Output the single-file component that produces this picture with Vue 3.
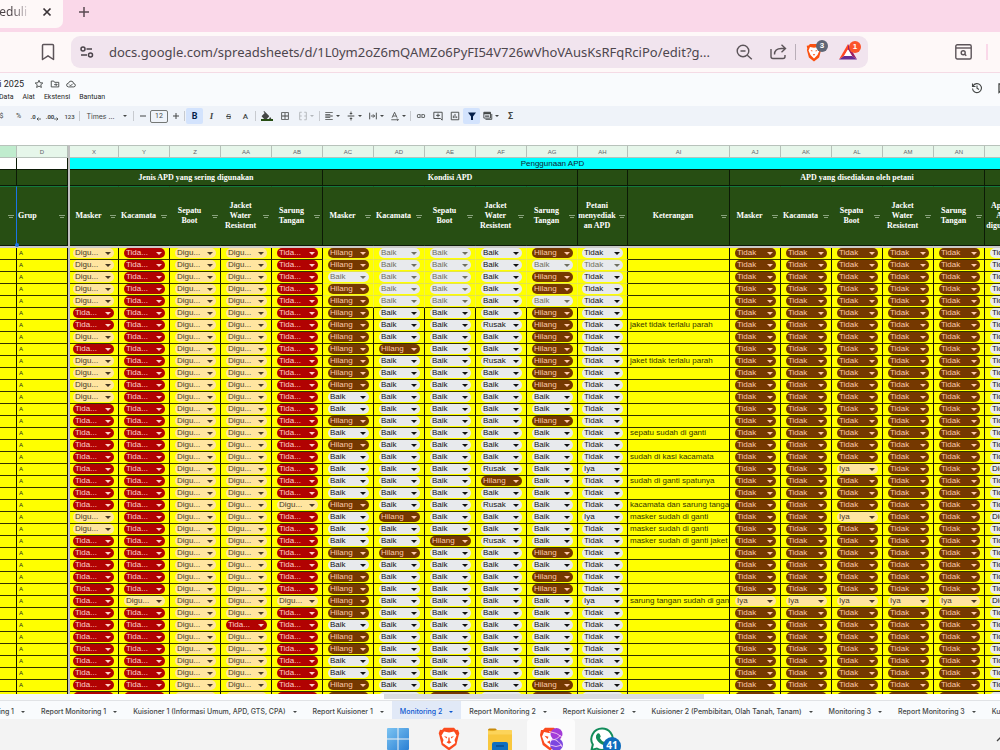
<script setup>
import { ref } from 'vue'

const url = ref('docs.google.com/spreadsheets/d/1L0ym2oZ6mQAMZo6PyFI54V726wVhoVAusKsRFqRciPo/edit?g...')
const fontSize = ref('12')

const menus = ['Data', 'Alat', 'Ekstensi', 'Bantuan']

const sheets = [
  'Monitoring 1',
  'Report Monitoring 1',
  'Kuisioner 1 (Informasi Umum, APD, GTS, CPA)',
  'Report Kuisioner 1',
  'Monitoring 2',
  'Report Monitoring 2',
  'Report Kuisioner 2',
  'Kuisioner 2 (Pembibitan, Olah Tanah, Tanam)',
  'Monitoring 3',
  'Report Monitoring 3',
  'Kuisioner 3',
]
const activeSheet = ref('Monitoring 2')

const letters = ['X', 'Y', 'Z', 'AA', 'AB', 'AC', 'AD', 'AE', 'AF', 'AG', 'AH', 'AI', 'AJ', 'AK', 'AL', 'AM', 'AN', 'AO']

const kit = ['Masker', 'Kacamata', 'Sepatu\nBoot', 'Jacket\nWater\nResistent', 'Sarung\nTangan']
const heads = [...kit, ...kit, 'Petani\nmenyediak\nan APD', 'Keterangan', ...kit, 'Apakah\nAPD\ndigunakan']
const groupEnds = [4, 9, 10, 11, 16]

const kinds = {
  D: { text: 'Digu...', cls: 'cream' },
  T: { text: 'Tida...', cls: 'red' },
  H: { text: 'Hilang', cls: 'brown' },
  B: { text: 'Baik', cls: 'gray' },
  b: { text: 'Baik', cls: 'gray faded' },
  R: { text: 'Rusak', cls: 'gray' },
  N: { text: 'Tidak', cls: 'gray' },
  n: { text: 'Tidak', cls: 'gray faded' },
  I: { text: 'Iya', cls: 'gray' },
  K: { text: 'Tidak', cls: 'brown' },
  Y: { text: 'Iya', cls: 'cream' },
  G: { text: 'Digu...', cls: 'gray' },
}

const source = [
  ['DTDDT HbbBH N'],
  ['DTDDT HbbBb n'],
  ['DTDDT bbbBH N'],
  ['DTDDT HbbBH N'],
  ['DTDDT HbbBb N'],
  ['TTDDT HBBBH N'],
  ['TTDDT HBBRH N', 'jaket tidak terlalu parah'],
  ['DTDDT HBBBH N'],
  ['TTDDT HHBBH N'],
  ['DTDDT HBBRH N', 'jaket tidak terlalu parah'],
  ['DTDDT HBBBH N'],
  ['DTDDT HBBBH N'],
  ['DTDDT BBBBB N'],
  ['TTDDT BBBBB N'],
  ['TTDDT HBBBH N'],
  ['TTDDT BBBBB N', 'sepatu sudah di ganti'],
  ['TTDDT HBBBB N'],
  ['TTDDT BBBBB N', 'sudah di kasi kacamata'],
  ['TTDDT BBBRB I', '', 'KKYKKG'],
  ['TTDDT BBBHB N', 'sudah di ganti spatunya'],
  ['TTDDT BBBBB N'],
  ['TTDDD HBBRB N', 'kacamata dan sarung tangan'],
  ['DTDDT BHBBB I', 'masker sudah di ganti', 'KKYKKG'],
  ['DTDDT BBBBB N', 'masker sudah di ganti'],
  ['TTDDT BBHRB N', 'masker sudah di ganti jaket'],
  ['TTDDT HHBBH N'],
  ['TTDDT BBBBB N'],
  ['TTDDT HBBBH N'],
  ['TTDDT HBBBH N'],
  ['TDDDD HBBBB I', 'sarung tangan sudah di ganti', 'YYYYYG'],
  ['TTDDT HBBBB N'],
  ['TTDTT BBBBB N'],
  ['TTDDT HBBBB N'],
  ['TTDDT HBBBB N'],
  ['TTDDT BBBBB N'],
  ['TTDDT BBBBB N'],
  ['TTDDT HBBBH N'],
  ['TTDDT HBHBH N'],
]

const rows = source.map(([codes, note = '', supplied = 'KKKKKN'], r) => {
  const used = [...codes.replace(/ /g, '')].map((c, i) => ({
    ...kinds[c],
    softX: r < 5 && i > 4 && i < 10,
    softY: r < 4 && i > 4,
  }))
  return { used, note, supplied: [...supplied].map((c) => kinds[c]) }
})
</script>

<template>
  <div class="screen">
    <header class="tabstrip">
      <div class="browser-tab">
        <span class="tab-title">Peduli</span>
        <button class="plain" aria-label="Tutup tab">
          <svg width="10" height="10" viewBox="0 0 10 10"><path d="M1.500 1.500l7 7M8.500 1.500l-7 7" stroke="#3b3438" stroke-width="1.700" /></svg>
        </button>
      </div>
      <button class="plain new-tab" aria-label="Tab baru">
        <svg width="12" height="12" viewBox="0 0 12 12"><path d="M6 1v10M1 6h10" stroke="#5a4a52" stroke-width="1.500" /></svg>
      </button>
    </header>

    <div class="navbar">
      <button class="plain bookmark" aria-label="Bookmark">
        <svg width="14" height="18" viewBox="0 0 14 18"><path d="M1.500 2.500q0-1 1-1h9q1 0 1 1v14L7 12.800 1.500 16.500z" fill="none" stroke="#5c5459" stroke-width="1.500" stroke-linejoin="round" /></svg>
      </button>
      <div class="address">
        <button class="plain tune" aria-label="Info situs">
          <svg width="14" height="12" viewBox="0 0 14 12" fill="none" stroke="#4a434a" stroke-width="1.500"><circle cx="3" cy="3" r="2" /><path d="M6.500 3H12M1 9h6" /><circle cx="10.500" cy="9" r="2" /></svg>
        </button>
        <input v-model="url" class="url" aria-label="Alamat" spellcheck="false" />
        <button class="plain icon-a" aria-label="Perkecil">
          <svg width="17" height="17" viewBox="0 0 17 17" fill="none" stroke="#5c5459" stroke-width="1.400"><circle cx="7" cy="7" r="5.800" /><path d="M4.500 7h5M11.300 11.300l4.500 4" /></svg>
        </button>
        <button class="plain icon-b" aria-label="Bagikan">
          <svg width="17" height="16" viewBox="0 0 17 16" fill="none" stroke="#5c5459" stroke-width="1.400"><path d="M1 5v7.500q0 2 2 2h10q2 0 2-2V11M4.500 10.500q0-6 7-6h4M11.500.800l4 3.700-4 3.700" /></svg>
        </button>
        <span class="divider"></span>
        <button class="plain shield" aria-label="Brave Shields">
          <svg width="16" height="19" viewBox="0 0 16 19"><path d="M4 1h8l1.500 1.500 1.800.3-.6 2.700.4 1.500-2 7.500L8 18.500 2.900 14.500.9 7l.4-1.500L.7 2.800l1.800-.3z" fill="#fb5110" /><path d="M4 4l4 .8L12 4l1.500 3.500-2 4.500L8 15.500 4.500 12l-2-4.500z" fill="#fff" /><path d="M4.500 6.900l2 .6-.4 1.300zM11.500 6.900l-2 .6.4 1.300zM6.800 11.500l1.200-.6 1.200.6L8 12.700z" fill="#fb5110" /></svg>
          <span class="badge slate">3</span>
        </button>
        <button class="plain triangle" aria-label="Brave Rewards">
          <svg width="18" height="16" viewBox="0 0 18 16"><path d="M9 0L0 15.500 5 12 9 5.500z" fill="#ff4724" /><path d="M9 0l9 15.500L13 12 9 5.500z" fill="#9e1f63" /><path d="M0 15.500h18L13 12H5z" fill="#662d91" /><path d="M9 5.500L5 12h8z" fill="#fff" /></svg>
          <span class="badge orange">1</span>
        </button>
      </div>
      <button class="plain find" aria-label="Cari tab">
        <svg width="17" height="16" viewBox="0 0 17 16" fill="none" stroke="#5c5459" stroke-width="1.400"><rect x=".8" y=".8" width="15.400" height="14.200" rx="1.500" /><path d="M1 4h15" /><circle cx="8.200" cy="8.800" r="2" /><path d="M9.700 10.300l1.600 1.500" /></svg>
      </button>
      <span class="edge"></span>
    </div>

    <div class="doc-head">
      <div class="doc-left">
        <div class="title-row">
          <span class="doc-title">i 2025</span>
          <button class="plain" aria-label="Bintang"><svg width="10" height="10" viewBox="0 0 24 24" fill="none" stroke="#444746" stroke-width="2.200"><path d="M12 3l2.700 6 6.500.6-5 4.300 1.500 6.400L12 17l-5.700 3.300 1.500-6.400-5-4.300 6.500-.6z" /></svg></button>
          <button class="plain" aria-label="Pindahkan"><svg width="10" height="10" viewBox="0 0 24 24" fill="none" stroke="#444746" stroke-width="2.200"><path d="M3 19V5h6l2 3h10v11zM10 13.500h7M14 10.500l3 3-3 3" /></svg></button>
          <button class="plain" aria-label="Tersimpan"><svg width="10" height="10" viewBox="0 0 24 24" fill="none" stroke="#444746" stroke-width="2.200"><path d="M6 19q-4.500-.5-4.500-4.500T6 10q1.500-5 6-5 5.500 0 6.500 6 4 .5 4 4t-4 4zM8 13.500l3 3 5-5" /></svg></button>
        </div>
        <nav class="menus">
          <button v-for="m in menus" :key="m" class="plain">{{ m }}</button>
        </nav>
      </div>
      <div class="doc-right">
        <button class="plain" aria-label="Histori"><svg width="12" height="12" viewBox="0 0 24 24" fill="none" stroke="#444746" stroke-width="2.200"><path d="M4 8a9 9 0 1 1-1 5M3 3v6h6M12 7v5.500l4 2.500" /></svg></button>
        <button class="plain" aria-label="Komentar"><svg width="10" height="12" viewBox="0 0 10 12" fill="none" stroke="#444746" stroke-width="1.300"><path d="M1 10.500V2h8v7H3z" /></svg></button>
      </div>
    </div>

    <div class="toolbar">
      <button class="plain w17">$</button>
      <button class="plain w17">%</button>
      <button class="plain w17 dec" aria-label="Kurangi desimal">.0<svg width="5" height="4" viewBox="0 0 5 4"><path d="M5 2H1M2.500.500L1 2l1.500 1.500" stroke="#444746" fill="none" stroke-width=".8" /></svg></button>
      <button class="plain w17 dec" aria-label="Tambah desimal">.00<svg width="5" height="4" viewBox="0 0 5 4"><path d="M0 2h4M2.500.500L4 2 2.500 3.500" stroke="#444746" fill="none" stroke-width=".8" /></svg></button>
      <button class="plain w17 num">123</button>
      <span class="sep"></span>
      <button class="plain font-pick"><span>Times ...</span><i class="caret"></i></button>
      <span class="sep"></span>
      <button class="plain w14" aria-label="Kurangi"><svg width="8" height="8" viewBox="0 0 8 8"><path d="M1 4h6" stroke="#444746" /></svg></button>
      <input v-model="fontSize" class="size" aria-label="Ukuran font" />
      <button class="plain w14" aria-label="Tambah"><svg width="8" height="8" viewBox="0 0 8 8"><path d="M1 4h6M4 1v6" stroke="#444746" /></svg></button>
      <span class="sep"></span>
      <button class="plain w17 on"><b>B</b></button>
      <button class="plain w17 ital"><em>I</em></button>
      <button class="plain w17"><s>S</s></button>
      <button class="plain w17 tcolor">A</button>
      <span class="sep"></span>
      <button class="plain w19 fill" aria-label="Warna isi"><svg width="11" height="9" viewBox="2 0 20 17"><path d="M16.560 8.940L7.620 0 6.210 1.410l2.380 2.380-5.150 5.150c-.59.59-.59 1.540 0 2.120l5.500 5.500c.6.590 1.500.590 2.120 0l5.500-5.500c.59-.58.59-1.530 0-2.120zM19 11.500s-2 2.170-2 3.500a2 2 0 0 0 4 0c0-1.330-2-3.500-2-3.500z" fill="#444746" /></svg></button>
      <button class="plain w17" aria-label="Batas"><svg width="10" height="10" viewBox="0 0 24 24"><path d="M3 3v18h18V3H3zm8 16H5v-6h6v6zm0-8H5V5h6v6zm8 8h-6v-6h6v6zm0-8h-6V5h6v6z" fill="#444746" /></svg></button>
      <button class="plain split dim" aria-label="Gabungkan"><svg width="10" height="10" viewBox="0 0 24 24"><path d="M9 3H4v18h5M15 3h5v18h-5M4 12h5M20 12h-5" fill="none" stroke="#444746" stroke-width="2.200" /></svg><i class="caret"></i></button>
      <span class="sep"></span>
      <button class="plain split" aria-label="Rata"><svg width="10" height="10" viewBox="0 0 24 24"><path d="M15 15H3v2h12v-2zm0-8H3v2h12V7zM3 13h18v-2H3v2zm0 8h18v-2H3v2zM3 3v2h18V3H3z" fill="#444746" /></svg><i class="caret"></i></button>
      <button class="plain split" aria-label="Rata vertikal"><svg width="10" height="10" viewBox="0 0 24 24"><path d="M8 19h3v4h2v-4h3l-4-4-4 4zm8-14h-3V1h-2v4H8l4 4 4-4zM4 11v2h16v-2H4z" fill="#444746" /></svg><i class="caret"></i></button>
      <button class="plain split" aria-label="Pembungkusan"><svg width="10" height="10" viewBox="0 0 24 24"><path d="M4 4v16M20 4v16M7 12h9M12 8l4 4-4 4" fill="none" stroke="#444746" stroke-width="2.200" /></svg><i class="caret"></i></button>
      <button class="plain split" aria-label="Rotasi"><svg width="10" height="10" viewBox="0 0 24 24"><path d="M5 16L11 3l6 13M7 12h8M3 21h17M17 18l3 3-3 2" fill="none" stroke="#444746" stroke-width="2" /></svg><i class="caret"></i></button>
      <span class="sep"></span>
      <button class="plain w17" aria-label="Link"><svg width="10" height="10" viewBox="0 0 24 24"><path d="M3.900 12c0-1.710 1.390-3.100 3.100-3.100h4V7H7c-2.760 0-5 2.240-5 5s2.240 5 5 5h4v-1.900H7c-1.710 0-3.100-1.390-3.100-3.100zM8 13h8v-2H8v2zm9-6h-4v1.900h4c1.710 0 3.100 1.390 3.100 3.100s-1.390 3.100-3.100 3.100h-4V17h4c2.760 0 5-2.240 5-5s-2.240-5-5-5z" fill="#444746" /></svg></button>
      <button class="plain w17" aria-label="Komentar"><svg width="10" height="10" viewBox="0 0 24 24"><path d="M2 3h20v19l-4-4H2zM12 6v9M7.500 10.500h9" fill="none" stroke="#444746" stroke-width="2.200" /></svg></button>
      <button class="plain w17" aria-label="Diagram"><svg width="10" height="10" viewBox="0 0 24 24"><path d="M3 3h18v18H3zM8 17v-6M12 17V7M16 17v-4" fill="none" stroke="#444746" stroke-width="2.200" /></svg></button>
      <button class="plain w17 on" aria-label="Filter"><svg width="8" height="8" viewBox="0 0 8 8"><path d="M0 .500h8L5 4.500V8H3V4.500z" fill="#041e49" /></svg></button>
      <button class="plain split" aria-label="Tampilan tabel"><svg width="10" height="10" viewBox="0 0 24 24"><path d="M2 3h16v14H2zM6 20h15V7" fill="none" stroke="#444746" stroke-width="2.200" /><path d="M2 3h16v5H2zM5 11h10v3H5z" fill="#444746" /></svg><i class="caret"></i></button>
      <button class="plain w17"><b>Σ</b></button>
    </div>

    <main class="grid">
      <table>
        <colgroup>
          <col class="c-c" /><col class="c-std" /><col class="c-bar" /><col class="c-x" />
          <col v-for="n in 9" :key="n" class="c-std" />
          <col class="c-ah" /><col class="c-ai" />
          <col v-for="n in 6" :key="'r' + n" class="c-std" />
        </colgroup>
        <thead>
          <tr class="letters">
            <th class="picked"></th>
            <th>D</th>
            <th class="bar"></th>
            <th v-for="l in letters" :key="l">{{ l }}</th>
          </tr>
          <tr class="banner">
            <th class="blank"></th>
            <th class="blank"></th>
            <th class="bar"></th>
            <th colspan="18" class="cyan">Penggunaan APD</th>
          </tr>
          <tr class="groups">
            <th></th>
            <th></th>
            <th class="bar"></th>
            <th colspan="5">Jenis APD yang sering digunakan</th>
            <th colspan="5">Kondisi APD</th>
            <th></th>
            <th></th>
            <th colspan="5">APD yang disediakan oleh petani</th>
            <th></th>
          </tr>
          <tr class="heads">
            <th class="selected"><i class="funnel"></i><i class="handle"></i></th>
            <th class="left">Grup<i class="funnel"></i></th>
            <th class="bar"></th>
            <th v-for="(h, i) in heads" :key="i" :class="{ end: groupEnds.includes(i) }">{{ h }}<i class="funnel"></i></th>
          </tr>
          <tr class="freeze"><td colspan="21"></td></tr>
        </thead>
        <tbody>
          <tr v-for="(row, r) in rows" :key="r">
            <td></td>
            <td class="grp">A</td>
            <td class="bar"></td>
            <td v-for="(c, i) in row.used" :key="'u' + i" :class="{ softx: c.softX, softy: c.softY }">
              <label class="chip" :class="c.cls"><select :aria-label="letters[i] + ' ' + (r + 1)"><option>{{ c.text }}</option></select></label>
            </td>
            <td class="note"><div>{{ row.note }}</div></td>
            <td v-for="(c, i) in row.supplied" :key="'s' + i">
              <label class="chip" :class="c.cls"><select :aria-label="letters[i + 12] + ' ' + (r + 1)"><option>{{ c.text }}</option></select></label>
            </td>
          </tr>
        </tbody>
      </table>
    </main>

    <div class="scroll"><span class="thumb"></span></div>

    <nav class="sheets">
      <button v-for="s in sheets" :key="s" class="plain sheet" :class="{ active: s === activeSheet }" @click="activeSheet = s">
        {{ s }}<i class="caret"></i>
      </button>
    </nav>

    <footer class="taskbar">
      <button class="plain app" aria-label="Start">
        <svg width="24" height="24" viewBox="0 0 24 24"><defs><linearGradient id="win" x1="0" y1="0" x2="1" y2="1"><stop offset="0" stop-color="#7cc4f2" /><stop offset="1" stop-color="#2a7fd4" /></linearGradient></defs><path d="M1 2q0-1 1-1h9.500v10.500H1zM12.500 1H22q1 0 1 1v9.500H12.500zM1 12.500h10.500V23H2q-1 0-1-1zM12.500 12.500H23V22q0 1-1 1h-9.500z" fill="url(#win)" /></svg>
      </button>
      <button class="plain app" aria-label="Brave">
        <svg width="22" height="24" viewBox="0 0 22 24"><path d="M6 .800h10L18 3l2-.2 1.300 3.500-.6 2L18.300 18 11 23.500 3.700 18 1.300 8.300l-.6-2L2 2.800 4 3z" fill="#fb4b1e" /><path d="M6 4.500l5 1 5-1 2.500 4-2 4.500.8 3L11 20.500 4.700 16l.8-3-2-4.500z" fill="#fff" /><path d="M6 9l3.200.9-.7 1.500zM16 9l-3.200.9.7 1.500zM10.400 10.500h1.200l.2 3.500 1.700 1.200-2.500 1.600-2.500-1.600 1.700-1.200z" fill="#fb4b1e" /></svg>
      </button>
      <button class="plain app" aria-label="File Explorer">
        <svg width="26" height="24" viewBox="0 0 26 24"><path d="M1 3q0-1.500 1.500-1.500h6L11 4h-10z" fill="#c88a0a" /><path d="M1 3.500h24q0 0 0 1V24H1z" fill="#f8c73d" /><path d="M1 3.500q6 1.500 9-.5h14q1 0 1 1.500v3H1z" fill="#fcd45a" /><path d="M5 24v-7q0-2 2-2h12q2 0 2 2v7z" fill="#0f6fc0" /><path d="M9 19h8" stroke="#0a4b8c" stroke-width="1.500" /></svg>
      </button>
      <button class="plain app current" aria-label="Brave Meet">
        <svg width="24" height="24" viewBox="0 0 24 24"><path d="M6 .800h9L17 3l2 0 1 3L18 18l-7 5.500L3.700 18 1 8l1-5 2 0z" fill="#fb4b1e" /><path d="M5 5l5 1 6-1v13l-5 2.500L5.500 16 3 9.500z" fill="#fff" /><path d="M5.500 8.800l4 1-1 2.200zM8 15l3-1.500V17z" fill="#fb4b1e" /><circle cx="17.500" cy="7" r="6" fill="#a23bd8" /><circle cx="17.500" cy="17.500" r="6.500" fill="#7b46e0" /><path d="M10 4.500q8 1 13 5.500M11.500 13q7 0 10-5M11 18q6 3 12 0M13 12q7 1 10 8" fill="none" stroke="#f4c7f2" stroke-width=".9" /></svg>
      </button>
      <button class="plain app" aria-label="WhatsApp">
        <svg width="26" height="24" viewBox="0 0 26 24"><path d="M13 1.500A10.700 10.700 0 0 0 3.800 17.600L2.500 23l5.400-1.500A10.700 10.700 0 1 0 13 1.500z" fill="#fff" stroke="#128c5a" stroke-width="2" /><path d="M8.500 6.500q1.500-1 2.300.8l.9 2q.2.700-.9 1.700 1.600 3 4.500 4 1-1.500 1.500-1.200l2.200 1.200q.8.500-.3 2-2 2.300-5.700.5-4.500-2.200-6-6.500Q6.400 8 8.500 6.500z" fill="#128c5a" /></svg>
        <span class="count">41</span>
      </button>
      <button class="plain tray" aria-label="Ikon tersembunyi">
        <svg width="12" height="8" viewBox="0 0 12 8"><path d="M1 7l5-5 5 5" fill="none" stroke="#444" stroke-width="1.300" /></svg>
      </button>
    </footer>
  </div>
</template>

<style>
body {
  margin: 0;
  overflow: hidden;
}
</style>

<style scoped>
.screen {
  display: flex;
  flex-direction: column;
  height: 100vh;
  overflow: hidden;
  background: #fff;
  font-family: Roboto, "Liberation Sans", sans-serif;
}
.plain {
  display: flex;
  align-items: center;
  justify-content: center;
  flex: none;
  margin: 0;
  padding: 0;
  border: 0;
  background: none;
  font: inherit;
  color: inherit;
  white-space: nowrap;
  position: relative;
}
svg {
  display: block;
  flex: none;
}

/* browser chrome */
.tabstrip {
  display: flex;
  flex: none;
  height: 32px;
  background: #fad8e9;
}
.browser-tab {
  display: flex;
  align-items: center;
  justify-content: flex-end;
  box-sizing: border-box;
  width: 63px;
  height: 28px;
  padding: 0 11px 4px 0;
  gap: 15px;
  background: #fef8f8;
  border-radius: 0 0 7px 0;
}
.tab-title {
  font: 12px/16px "Noto Sans", sans-serif;
  background: linear-gradient(90deg, #4b4347 60%, #d8d0d4);
  background-clip: text;
  color: transparent;
}
.new-tab {
  width: 42px;
  height: 24px;
}
.navbar {
  display: flex;
  align-items: center;
  flex: none;
  box-sizing: border-box;
  height: 41px;
  border-bottom: 1px solid #f5dbe5;
  background: #fef8f8;
}
.bookmark {
  margin-left: 41px;
}
.address {
  display: flex;
  align-items: center;
  flex: 1;
  height: 32px;
  margin-left: 16px;
  padding: 0 8px 0 9px;
  background: #f1e4ee;
  border-radius: 9px;
}
.url {
  flex: 1;
  min-width: 0;
  height: 24px;
  margin-left: 15px;
  padding: 0;
  border: 0;
  outline: 0;
  background: none;
  font: 13px/24px "Noto Sans", sans-serif;
  color: #4d464d;
}
.icon-a {
  margin-left: 12px;
}
.icon-b {
  margin-left: 17px;
}
.divider {
  width: 1px;
  height: 16px;
  margin-left: 8px;
  background: #b9aeb8;
}
.shield {
  margin-left: 10px;
}
.triangle {
  margin-left: 17px;
  margin-right: 3px;
}
.badge {
  position: absolute;
  left: 10px;
  top: -3px;
  width: 12px;
  height: 12px;
  border-radius: 6px;
  font: bold 8px/12px "Liberation Sans", sans-serif;
  color: #fff;
}
.slate {
  background: #5f6675;
}
.orange {
  background: #fb542b;
}
.find {
  margin-left: 87px;
}
.edge {
  width: 2px;
  height: 16px;
  margin: 0 12px 0 14px;
  background: #fad8e9;
}

/* document header */
.doc-head {
  display: flex;
  justify-content: space-between;
  flex: none;
  height: 33px;
  overflow: hidden;
  background: #f9fbfd;
  color: #1f1f1f;
}
.title-row {
  display: flex;
  align-items: center;
  gap: 6px;
  height: 14px;
  margin-top: 4px;
}
.doc-title {
  display: flex;
  justify-content: flex-end;
  width: 24px;
  margin-right: 4px;
  font: 9px/14px Roboto, sans-serif;
  white-space: nowrap;
}
.menus {
  display: flex;
  gap: 9px;
  height: 12px;
  margin-left: -1px;
  font-size: 7px;
  line-height: 12px;
}
.doc-right {
  display: flex;
  gap: 15px;
  height: 30px;
  margin-right: -8px;
}

/* toolbar */
.toolbar {
  display: flex;
  align-items: center;
  flex: none;
  height: 20px;
  margin-bottom: 19px;
  margin-left: -7px;
  overflow: hidden;
  background: #eff3f9;
  color: #444746;
  font-size: 7px;
}
.toolbar > .plain {
  height: 16px;
}
.w14 {
  width: 15px;
}
.w17 {
  width: 17px;
}
.w19 {
  width: 19px;
}
.split {
  width: 22px;
  gap: 2px;
}
.dim {
  opacity: 0.35;
  width: 25px;
}
.dec {
  font-weight: bold;
  font-size: 6px;
}
.dec svg {
  align-self: flex-end;
  margin-bottom: 3px;
}
.num {
  font-size: 6px;
  font-weight: 500;
}
.sep {
  flex: none;
  width: 1px;
  height: 10px;
  margin: 0 1px;
  background: #c7cacf;
}
.font-pick {
  width: 51px;
  gap: 8px;
  font-size: 7px;
  font-family: Inter, sans-serif;
}
.size {
  box-sizing: border-box;
  width: 18px;
  height: 13px;
  padding: 0;
  border: 1px solid #747775;
  border-radius: 2px;
  background: none;
  font: 7px/11px Roboto, sans-serif;
  color: #444746;
  text-align: center;
}
.on {
  background: #d3e3fd;
  border-radius: 2px;
  color: #041e49;
}
.on b,
.w17 > b {
  font-size: 9px;
}
.ital {
  font: bold 9px "Liberation Serif", serif;
}
.w17 > s {
  font-size: 8px;
}
.tcolor {
  font-size: 8px;
  font-weight: 500;
}
.fill {
  align-items: flex-start;
}
.fill::after {
  content: "";
  position: absolute;
  left: 4px;
  right: 3px;
  bottom: 3px;
  height: 2px;
  background: #274e13;
}
.fill svg {
  margin-top: 3px;
}
.caret {
  display: inline-block;
  flex: none;
  border: 2px solid transparent;
  border-top-color: currentColor;
  border-bottom: 0;
}

/* spreadsheet */
.grid {
  flex: 1;
  min-height: 0;
  overflow: hidden;
}
table {
  width: 1036px;
  table-layout: fixed;
  border-collapse: separate;
  border-spacing: 0;
}
.c-c { width: 17px; }
.c-std { width: 51px; }
.c-bar { width: 2px; }
.c-x { width: 49px; }
.c-ah { width: 50px; }
.c-ai { width: 102px; }
th,
td {
  box-sizing: border-box;
  position: relative;
  padding: 0;
}
th {
  border-right: 1px solid #0c1a06;
  border-bottom: 1px solid #0c1a06;
  background: #274e13;
  color: #fff;
  font: bold 8px/10px "Liberation Serif", serif;
  text-align: center;
  white-space: pre-line;
}
.letters th {
  height: 13px;
  border-top: 1px solid #b8c2bb;
  border-right: 1px solid #b5c0b8;
  border-bottom: 1px solid #b8c2bb;
  background: #e6f6ea;
  color: #5f6368;
  font: 6px/8px "Liberation Sans", sans-serif;
}
.letters .picked {
  background: #c0ecce;
}
.banner th {
  height: 12px;
}
.banner .blank {
  background: #fff;
}
.banner .cyan {
  background: #0ff;
  color: #123;
  font: 8px/10px "Liberation Sans", sans-serif;
}
.groups th {
  height: 16px;
}
.heads th {
  height: 60px;
  border-top: 1px solid #137a3c;
  border-right-color: #274e13;
  padding-right: 11px;
}
.heads .end {
  border-right-color: #0c1a06;
}
.heads .left {
  padding-left: 1px;
  text-align: left;
  border-right-color: #0c1a06;
}
.heads .selected {
  border-right: 1px solid #1a73e8;
}
.letters .bar,
.banner .bar,
.groups .bar,
.heads .bar,
tbody .bar {
  padding: 0;
  border: 0;
  background: #bfbfbf;
}
.funnel {
  position: absolute;
  right: 2px;
  top: 28px;
  width: 6px;
  border-top: 1px solid #8aa37e;
}
.funnel::after {
  content: "";
  position: absolute;
  left: 1px;
  top: 1px;
  width: 4px;
  height: 1px;
  background: #8aa37e;
}
.handle {
  position: absolute;
  z-index: 1;
  right: -3px;
  bottom: -2px;
  width: 4px;
  height: 4px;
  border-radius: 2px;
  background: #1a73e8;
}
.freeze td {
  height: 2px;
  border: 0;
  background: #c9c9c9;
}
tbody td {
  height: 12px;
  border-right: 1px solid #111100;
  border-bottom: 1px solid #333300;
  background: #ff0;
  vertical-align: top;
}
tbody .softx {
  border-right-color: #f1f14a;
}
tbody .softy {
  border-bottom-color: #e3e34a;
}
tbody .grp {
  padding-left: 2px;
  font: 6px/11px "Liberation Sans", sans-serif;
  color: #222;
}
.note div {
  width: 101px;
  padding-left: 2px;
  box-sizing: border-box;
  overflow: hidden;
  white-space: nowrap;
  font: 8px/10px "Liberation Sans", sans-serif;
  color: #333300;
}
.chip {
  display: block;
  position: relative;
  width: 41px;
  height: 10px;
  margin: 0 4px 0 auto;
  border-radius: 5px;
}
.chip::after {
  content: "";
  position: absolute;
  right: 3px;
  top: 4px;
  border: 3px solid transparent;
  border-top-color: currentColor;
  border-bottom: 0;
}
.chip select {
  display: block;
  appearance: none;
  width: 100%;
  height: 10px;
  margin: 0;
  padding: 0 0 0 2px;
  border: 0;
  background: none;
  color: inherit;
  font: 8px/10px "Liberation Sans", sans-serif;
}
.cream {
  background: #ffe5a0;
  color: #473822;
}
.red {
  background: #b10202;
  color: #ffcfc9;
}
.brown {
  background: #753800;
  color: #ffc8aa;
}
.gray {
  background: #e8eaed;
  color: #111;
}
.faded {
  color: #6f6f60;
}

/* bottom */
.scroll {
  flex: none;
  height: 6px;
  border-bottom: 1px solid #e1e3e6;
  background: linear-gradient(90deg, #f6f7f8 7%, #fff 7%);
}
.thumb {
  display: block;
  width: 32%;
  height: 5px;
  margin-left: 38.4%;
  background: #dadce0;
}
.sheets {
  display: flex;
  flex: none;
  height: 18px;
  overflow: hidden;
  margin-left: -35px;
  background: #f9fbfd;
  color: #444746;
  font: 500 7px/12px Inter, sans-serif;
}
.sheet {
  gap: 7px;
  padding: 3px 8px 0 8px;
}
.sheet.active {
  background: #e1e9f7;
  color: #0b57d0;
}
.taskbar {
  display: flex;
  justify-content: center;
  align-items: flex-start;
  flex: none;
  position: relative;
  height: 31px;
  gap: 3px;
  background: #f3f3f3;
}
.app {
  width: 48px;
  height: 31px;
  align-items: flex-start;
  padding-top: 8px;
}
.current {
  background: #fcfcfc;
  border-radius: 4px 4px 0 0;
}
.count {
  position: absolute;
  left: 25px;
  top: 18px;
  width: 18px;
  height: 18px;
  border-radius: 9px;
  background: #0f6cbd;
  color: #fff;
  font: bold 10px/17px "Open Sans", sans-serif;
}
.tray {
  position: absolute;
  right: -8px;
  top: 15px;
}
</style>
